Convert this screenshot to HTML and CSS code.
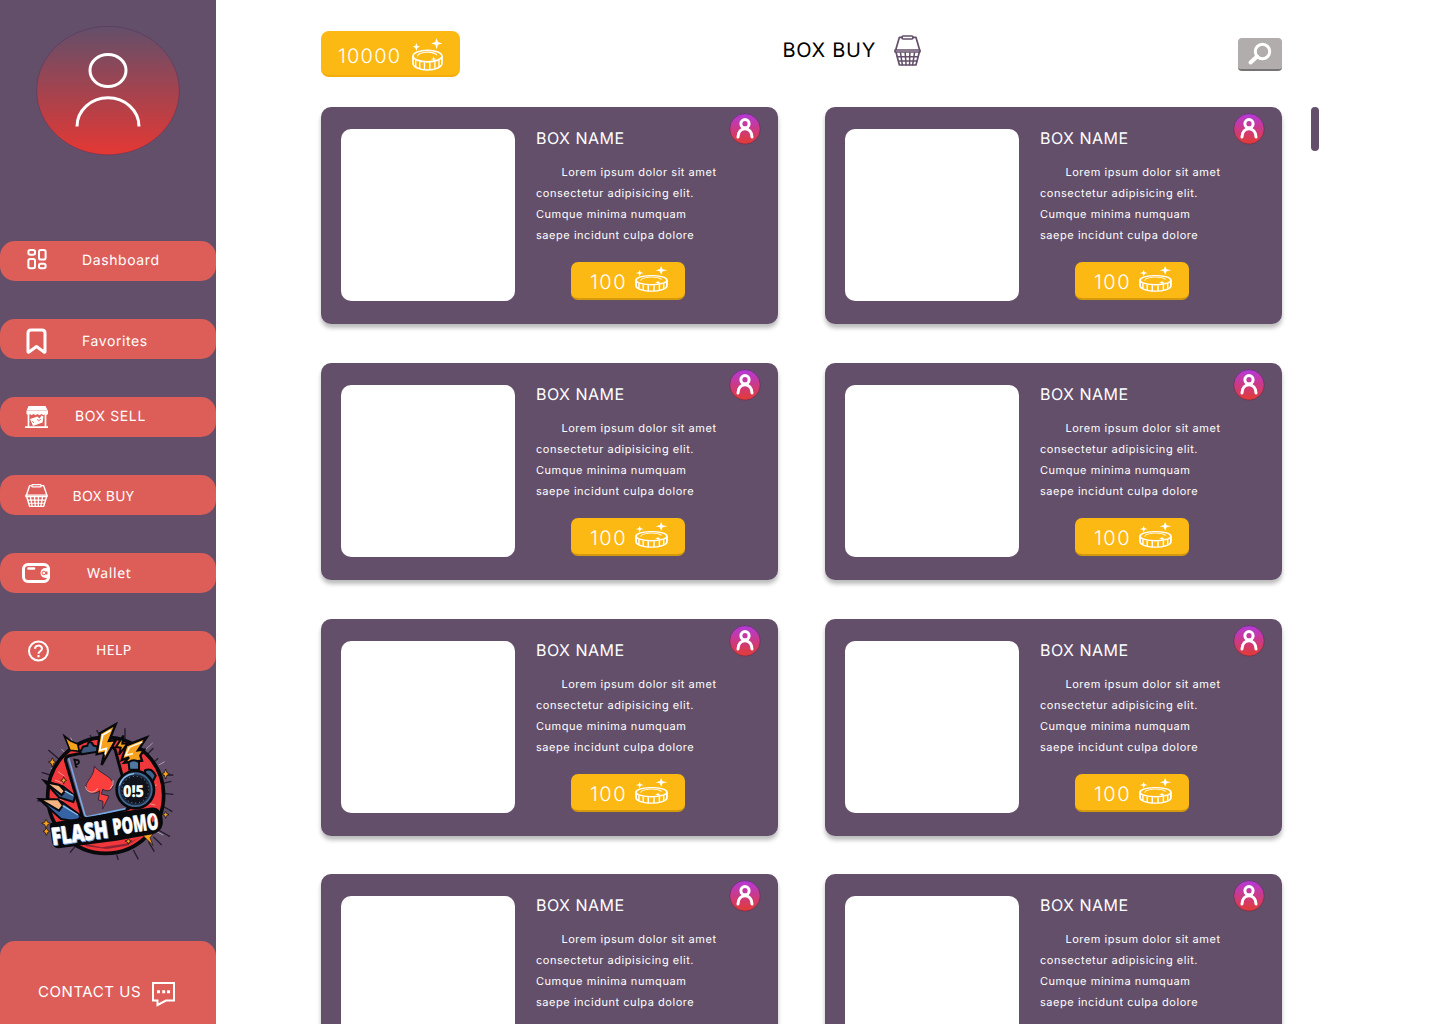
FILE: index.html
```html
<!DOCTYPE html>
<html lang="en">
<head>
<meta charset="utf-8">
<title>Box Buy</title>
<link rel="stylesheet" href="styles.css">
<script src="cards.js" defer></script>
</head>
<body>
<svg class="defs" aria-hidden="true">
  <defs>
    <linearGradient id="avatar-fill" x1="0" y1="0" x2="0" y2="1"><stop offset="0" stop-color="#634f6a"/><stop offset="1" stop-color="#e43834"/></linearGradient>
    <linearGradient id="seller-fill" x1="0" y1="0" x2="0" y2="1"><stop offset="0" stop-color="#b339dc"/><stop offset="1" stop-color="#e33b31"/></linearGradient>
  </defs>
  <symbol id="coin" viewBox="306 53 92 97" preserveAspectRatio="none">
    <path fill="currentColor" d="M379 53l4 12 13 4-13 4-4 13-4-13-12-4 12-4zM319 68l3 8 8 3-8 3-3 9-3-9-8-3 8-3zM370 107l2 6 6 2-6 2-2 6-2-6-6-2 6-2z"/>
    <g fill="none" stroke="currentColor" stroke-width="5">
      <ellipse cx="352" cy="106" rx="43" ry="17"/>
      <path d="M309 106v21c0 11 20 20 43 20s43-9 43-20v-21"/>
      <path stroke-width="4" d="M317 118v20M329 123v20M343 125v22M359 125v22M374 122v21M386 117v21"/>
      <path stroke-width="3" d="M322 107c3-13 43-18 58-4"/>
    </g>
  </symbol>
  <symbol id="basket" viewBox="372 30 80 93" preserveAspectRatio="none">
    <g fill="none" stroke="currentColor" stroke-width="5" stroke-linejoin="round">
      <rect x="396" y="33" width="32" height="9" rx="3"/>
      <path d="M396 37h-8l-11 38M428 37h9l11 38M375 75h74v6h-74zM378 82l10 38h49l10-38"/>
      <path stroke-width="4.500" d="M380 95h65M384 108h57M391 82l6 39M405 82l3 39M419 82l-1 39M433 82l-6 39"/>
    </g>
  </symbol>
  <symbol id="seller" viewBox="0 0 32 32">
    <circle cx="16" cy="15.900" r="15.300" fill="url(#seller-fill)" stroke="#59305d" stroke-width=".7"/>
    <g fill="none" stroke="#fff" stroke-width="3" stroke-linecap="round"><circle cx="16" cy="10.700" r="4.100"/><path d="M9 24c.2-5 3-8.300 7-8.300s6.800 3.300 7 8.300"/></g>
  </symbol>
</svg>
<div class="app">
  <aside class="sidebar">
    <svg class="avatar" viewBox="0 0 144 130">
      <ellipse cx="72" cy="64.600" rx="71.300" ry="64.200" fill="url(#avatar-fill)" stroke="#4b285a" stroke-opacity=".4" stroke-width=".9"/>
      <g fill="none" stroke="#fff" stroke-width="3"><ellipse cx="72" cy="44.500" rx="18" ry="16"/><path d="M41 100.500c0-16 14-28.700 31-28.700s31 12.700 31 28.700"/></g>
    </svg>
    <nav class="menu">
      <a class="item dashboard"><svg class="icon" viewBox="0 0 40 40"><g fill="none" stroke="#fff" stroke-width="2"><rect x="16.400" y="9.100" width="6.600" height="4.600" rx="1.800"/><rect x="27" y="9.100" width="6.600" height="9.400" rx="1.800"/><rect x="16.400" y="17.900" width="6.600" height="9.400" rx="1.800"/><rect x="27" y="22.700" width="6.600" height="4.600" rx="1.800"/></g></svg><span>Dashboard</span></a>
      <a class="item favorites"><svg class="icon" viewBox="0 0 40 40"><path d="M19 14q0-3 3-3h11q3 0 3 3v18.500q0 1.200-1 .5l-7.500-5.500-7.500 5.500q-1 .7-1-.5z" fill="none" stroke="#fff" stroke-width="3" stroke-linejoin="round"/></svg><span>Favorites</span></a>
      <a class="item sell"><svg class="icon" viewBox="0 0 40 40"><path fill="#fff" d="M18.500 9h17l2.500 5v3l-1.500 1-1.500-1-1.500 1.300-2-1.300-2 1.300-2-1.300-2 1.300-2-1.300-2 1.300L20 17l-1.500 1-2-1v-3z"/><path fill="none" stroke="#fff" stroke-width="1.700" d="M18.500 17v13M35.500 17v13M15 30.200h23"/><path fill="#dd5e59" opacity=".35" d="M17 13h20v1H17z"/><path fill="#fff" d="M20 22l7.500-2.500 2 2 2-3 2 1-1 6-9.500 3.500z"/><path fill="none" stroke="#dd5e59" stroke-width=".8" d="M22 24l2 2M27.500 22l1 2 2.500-2"/></svg><span>BOX SELL</span></a>
      <a class="item buy"><svg class="icon basket"><use href="#basket"/></svg><span>BOX BUY</span></a>
      <a class="item wallet"><svg class="icon" viewBox="0 0 40 40"><g fill="none" stroke="#fff" stroke-width="3"><rect x="13.500" y="11.500" width="25" height="17" rx="4.500"/><path stroke-linecap="round" stroke-width="2.500" d="M18.500 15.500h5.500"/></g><path fill="#fff" d="M40 15h-4.500a5 5 0 0 0 0 10H40z"/><circle cx="33.800" cy="20" r="1.800" fill="none" stroke="#dd5e59" stroke-width="1"/><path fill="#dd5e59" d="M35.700 18.500h1.800v3h-1.800z"/></svg><span>Wallet</span></a>
      <a class="item help"><svg class="icon" viewBox="0 0 40 40"><g fill="none" stroke="#fff" stroke-width="2"><circle cx="28.500" cy="20" r="9.500"/><path d="M25 17.800c.1-4.200 7-4.200 7-.2 0 2.800-3.500 2.500-3.500 5.200M28.500 24v2.200"/></g></svg><span>HELP</span></a>
    </nav>
    <svg class="logo" viewBox="0 0 450 450">
      <g stroke="#241c2d" stroke-width="4" fill="none"><path d="M35 172l45 14M22 258l35-5M55 105l35 30M105 65l20 30M180 60l15 25M200 45l12 25M285 40v35M370 100l-30 30M385 130l-25 20M400 235l30 3M392 270l35 20M385 345l35 20M370 365l25 25M355 380l18 30M310 405l15 28M260 420l5 15M135 395l-15 18M400 180h30M398 205l26-6"/></g>
      <path d="M94 102l18 18M122 68l10 22M62 160l15 8M53 195l20 5M386 150l18-10M348 102l20-18M380 350l20 10" stroke="#cfc6d4" stroke-width="2"/>
      <circle cx="227" cy="241" r="174" fill="#ef373c" stroke="#08090d" stroke-width="11"/>
      <path d="M72 220l22 4M75 195l24 10M84 170l20 14M76 250l24 6M85 290l35 10M380 210l-20 4M376 270l-20-4" stroke="#fc8c83" stroke-width="3"/>
      <path d="M145 382l70 15 80-12 35-18-40 25-60 10-60-8z" fill="#8e2433"/>
      <path d="M103 63l18 14 22 10 5 22-28-3z" fill="#f6a21c" stroke="#08090d" stroke-width="5"/>
      <path d="M117 122l125-25q10-2 14 9l43 160q4 14-9 17l-116 28q-14 3-18-9L107 139q-3-14 10-17z" fill="#655069" stroke="#08090d" stroke-width="9"/>
      <path d="M116 130l48 168q3 9 11 7l112-24" fill="none" stroke="#78a7e2" stroke-width="5"/>
      <path d="M151 110l8-15 13-3q2-16 14-8l4 7 12 4 2 15-50 8z" fill="#3c587c" stroke="#08090d" stroke-width="6"/>
      <path d="M130 133l15 3q5 7-2 11l-6 2M134 136l4 20M140 153v5" fill="none" stroke="#08090d" stroke-width="5"/>
      <path d="M193 153c12 19 46 29 54 46 8 20-8 37-29 24l-4 14 23 6-19 39 1-23-14-4 4-28c-14 14-43 7-41-15 2-15 25-29 25-59z" fill="#fa3f3d" stroke="#3c2439" stroke-width="3"/>
      <path d="M167 215c2 19 28 23 36 5M240 221q13-11 9-25" fill="none" stroke="#ffb0ab" stroke-width="3"/>
      <path d="M257 28l-47 27-10 63 23-5-8 37 42-74-20 2z" fill="#f7a11e" stroke="#08090d" stroke-width="7"/>
      <path d="M242 46l-24 14-9 46 20-6-4 19" fill="none" stroke="#fff" stroke-width="5"/>
      <path d="M280 62l-22 34 14 2-5 21 26-34-16 1z" fill="#f7a11e" stroke="#08090d" stroke-width="6"/>
      <path d="M350 67l-61 24-14 44 22-8-14 16 53-6-5-15 11-18-18 2z" fill="#f7a11e" stroke="#08090d" stroke-width="7"/>
      <path d="M337 81l-39 16-11 24 22-5" fill="none" stroke="#fff4dc" stroke-width="5"/>
      <g stroke="#08090d" stroke-width="6"><path d="M42 197l57 17 37 30-6 17-43-14z" fill="#355988"/><path d="M28 253l67 7 57 42-9 18-50-8z" fill="#3563a4"/><path d="M46 202l42 8 17 18-10 12z" fill="#f3b483"/><path d="M30 253l55 0 14 18-12 16z" fill="#f3b483"/></g>
      <path d="M104 228l26 14M98 272l46 28" stroke="#8dbce9" stroke-width="4"/>
      <path d="M296 142q15-13 31 0v22h-29z" fill="#4f779f" stroke="#08090d" stroke-width="6"/><path d="M345 166q20-10 32 16l-9 18-22-15z" fill="#3b638d" stroke="#08090d" stroke-width="6"/>
      <circle cx="316" cy="224" r="56" fill="#406792" stroke="#08090d" stroke-width="8"/><circle cx="316" cy="224" r="44" fill="#10131c" stroke="#1c2b42" stroke-width="5"/><circle cx="316" cy="224" r="40" fill="none" stroke="#93bfdc" stroke-width="3" stroke-dasharray="2 10"/><path d="M268 212q10-32 44-36" fill="none" stroke="#8fc0ed" stroke-width="4"/>
      <text class="logo-time" x="279" y="246" textLength="63" lengthAdjust="spacingAndGlyphs">0!5</text>
      <g fill="#f7a11e" stroke="#08090d" stroke-width="2"><path d="M67 128l4 10 8 3-8 4-4 11-4-11-8-4 8-3zM407 162l4 11 8 4-8 4-4 11-4-11-8-4 8-4zM48 313l5 9 9 3-9 4-5 10-4-10-9-4 9-3zM49 339l4 7 6 3-6 3-4 9-4-9-6-3 6-3zM407 289l3 7 7 3-7 3-3 8-3-8-7-3 7-3zM101 185l3 8 6 3-6 3-3 8-3-8-6-3 6-3zM335 358l35-2-10 12 9 23zM295 370l3 6 7 2-7 3-3 7-3-7-7-3 7-2z"/></g>
      <path d="M68 326l165-26 132-19q20-3 28 22 10 42-27 51l-108 20-172 22q-13 1-16-14l-7-44q-1-10 5-12z" fill="#08090d" stroke="#08090d" stroke-width="7" stroke-linejoin="round"/>
      <g transform="rotate(-8 225 340)"><text class="logo-name logo-shade" x="65" y="371" textLength="170" lengthAdjust="spacingAndGlyphs">FLASH</text><text class="logo-name" x="62" y="368" textLength="170" lengthAdjust="spacingAndGlyphs">FLASH</text><text class="logo-name logo-small" x="248" y="364" textLength="138" lengthAdjust="spacingAndGlyphs">POMO</text></g>
      <path d="M368 301q12 10 0 22-9-12 0-22z" fill="#e83c40"/>
    </svg>
    <a class="contact"><span>CONTACT US</span><svg class="chat" viewBox="0 0 24 25"><path fill="none" stroke="#fff" stroke-width="2" d="M1 1h21v17.500h-8L5.500 23v-4.500H1z"/><path fill="#fff" d="M5 8.300h3v3H5zM10.200 8.300h3v3h-3zM15 8.300h3v3h-3z"/></svg></a>
  </aside>
  <main class="main">
    <header class="header">
      <div class="balance"><span>10000</span><svg class="coin"><use href="#coin"/></svg></div>
      <h1 class="title"><span>BOX BUY</span><svg class="title-basket"><use href="#basket"/></svg></h1>
      <button class="search" aria-label="Search"><svg viewBox="0 0 44 33"><circle cx="24.500" cy="13.500" r="7.200" fill="none" stroke="#fff" stroke-width="3"/><path d="M19 18.500l-6.500 6" stroke="#fff" stroke-width="4" stroke-linecap="round"/></svg></button>
    </header>
    <div class="content"><section class="grid" id="boxes"></section><div class="scrollbar"></div></div>
  </main>
</div>
<template id="box">
  <article class="card">
    <div class="picture"></div>
    <div class="details">
      <h2>BOX NAME</h2>
      <p>Lorem ipsum dolor sit amet<br>consectetur adipisicing elit.<br>Cumque minima numquam<br>saepe incidunt culpa dolore</p>
      <div class="price"><span>100</span><svg class="coin"><use href="#coin"/></svg></div>
    </div>
    <svg class="seller"><use href="#seller"/></svg>
  </article>
</template>
</body>
</html>
```
FILE: styles.css
```css
* { box-sizing: border-box; }
body { margin: 0; font-family: Inter, "Liberation Sans", sans-serif; background: #fff; color: #fff; text-rendering: geometricPrecision; }
svg { display: block; flex: none; }
.defs { position: absolute; width: 0; height: 0; }
.app { display: flex; height: 1024px; overflow: hidden; }
.sidebar { width: 216px; flex: none; background: #634f6a; display: flex; flex-direction: column; }
.avatar { width: 144px; height: 130px; margin: 26px 0 85px 36px; }
.menu { display: flex; flex-direction: column; gap: 38px; }
.item { height: 40px; border-radius: 15px; background: #dd5e59; display: flex; align-items: center; font-size: 14px; line-height: 20px; letter-spacing: .6px; }
.icon { width: 40px; height: 40px; margin-left: 10px; }
.dashboard .icon { margin-left: 12px; }
.favorites .icon { margin-left: 9px; }
.icon.basket { width: 23px; height: 23px; margin: 0 0 0 25px; }
.dashboard span { margin: 0 0 0 30px; }
.favorites span { margin: 6px 0 0 33px; }
.sell span { margin: 0 0 0 25px; }
.buy { font-family: "Noto Sans", sans-serif; letter-spacing: .4px; }
.buy span { margin: 4px 0 0 24.500px; }
.wallet, .help { font-family: "Noto Sans", sans-serif; }
.wallet span { margin: 2px 0 0 37px; }
.help span { margin: 0 0 0 46px; letter-spacing: .4px; }
.logo { width: 150px; height: 150px; margin: 44px 0 0 30px; }
.logo-time { font: 800 50px "Open Sans", sans-serif; fill: #fff; }
.logo-name { font: 800 72px "Open Sans", sans-serif; fill: #fff; stroke: #fff; stroke-width: 1.500px; }
.logo-small { font-size: 68px; }
.logo-shade { fill: #79a9e5; stroke: #79a9e5; }
.contact { height: 83px; margin-top: auto; padding: 40px 0 0 38px; border-radius: 15px 15px 0 0; background: #dd5e59; display: flex; align-items: flex-start; font-size: 15px; line-height: 22px; letter-spacing: .55px; }
.contact span { width: 114px; white-space: nowrap; }
.chat { width: 24px; height: 25px; margin-top: 1px; }
.main { flex: 1; padding: 31px 0 0 105px; }
.header { width: 961px; height: 76px; display: flex; align-items: flex-start; justify-content: space-between; }
.balance, .price { background: #fdb913; display: flex; align-items: flex-start; font-size: 20px; line-height: 24px; }
.balance { width: 139px; height: 46px; border-radius: 8px; border-bottom: 2px solid #f5ac0d; padding: 13px 0 0 17px; font-weight: 350; letter-spacing: 1.200px; }
.balance span { width: 74px; }
.balance .coin { width: 31px; height: 33px; margin-top: -6px; }
.title { display: flex; margin: 4px -5px 0 0; color: #000; font-size: 20px; font-weight: 400; letter-spacing: .7px; line-height: 30px; }
.title span { width: 111px; }
.title-basket { width: 27px; height: 31px; color: #634f6a; }
.search { width: 44px; height: 33px; padding: 0; margin-top: 7px; border: 0; border-bottom: 2px solid #777374; border-radius: 4px; background: #b2adad; }
.search svg { width: 44px; height: 33px; }
.content { display: flex; align-items: flex-start; gap: 29px; }
.grid { display: grid; grid-template-columns: 457px 457px; gap: 39px 47px; }
.card { position: relative; height: 217px; border-radius: 10px; padding: 22px 20px; background: #634f6a; box-shadow: 0 4px 4px rgba(0,0,0,.27); display: flex; gap: 21px; }
.card:nth-child(n+7) { margin-top: -1px; }
.picture { width: 174px; height: 172px; flex: none; border-radius: 10px; background: #fff; }
.details h2 { margin: -1px 0 0; font-size: 16px; font-weight: 400; line-height: 20px; letter-spacing: .48px; }
.details p { margin: 14px 0 0; font-size: 11px; line-height: 21px; letter-spacing: .54px; text-indent: 25.400px; white-space: nowrap; }
.price { width: 114px; height: 38px; margin: 16px 0 0 35px; border-radius: 7px; border-bottom: 2px solid #d7990c; padding: 8px 0 0 19px; font-weight: 350; letter-spacing: 1.500px; }
.price span { width: 44.500px; }
.price .coin { width: 33px; height: 26px; margin-top: -4px; }
.seller { position: absolute; top: 6px; right: 17px; width: 32px; height: 32px; }
.scrollbar { width: 8px; height: 44px; border-radius: 4px; background: #634f6a; }
```
FILE: cards.js
```js
const grid = document.getElementById("boxes");
const template = document.getElementById("box");
for (let i = 0; i < 8; i++) grid.append(template.content.cloneNode(true));
```
